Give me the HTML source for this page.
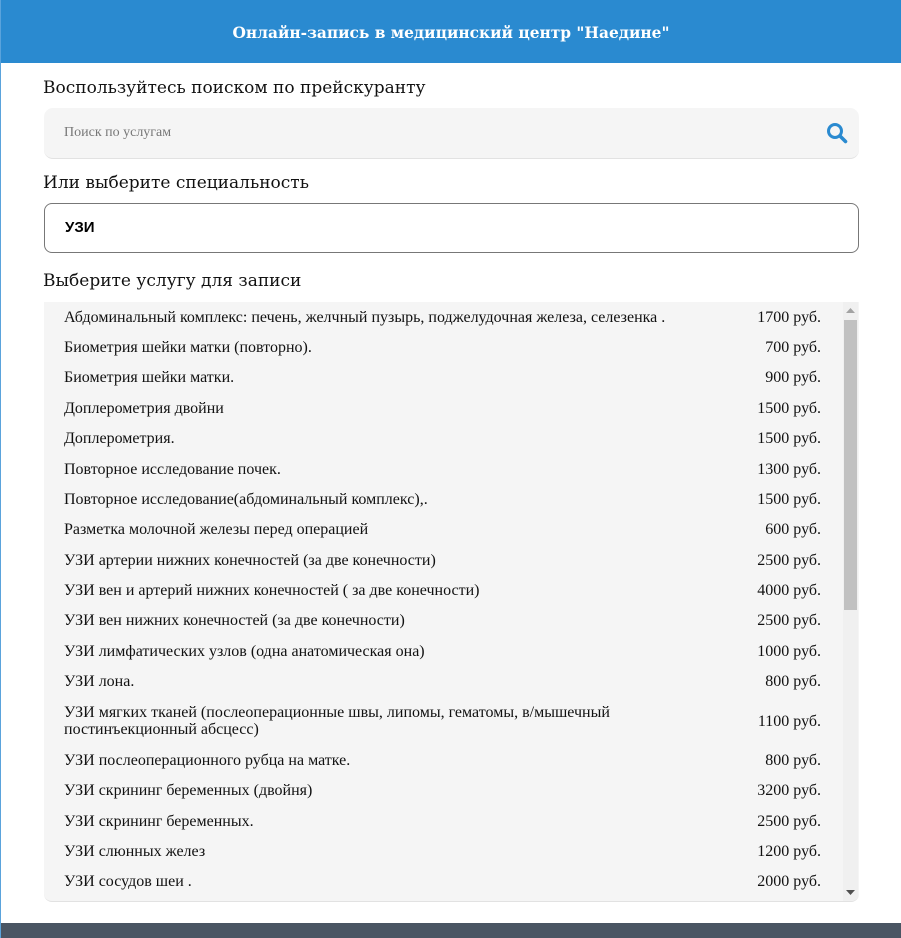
<!DOCTYPE html>
<html><head><meta charset="utf-8"><style>
*{box-sizing:border-box;margin:0;padding:0}
html,body{width:901px;height:938px;overflow:hidden;background:#fff}
body{position:relative;font-family:"Liberation Serif",serif;border-left:1px solid #5aa3dc}
.hdr{position:absolute;left:0;top:0;width:900px;height:63px;background:#2a8ad0;color:#fff;text-align:center;line-height:67px;font-family:"DejaVu Serif","Liberation Serif",serif;font-size:15.4px;font-weight:bold}
h2{position:absolute;left:42px;font-weight:normal;color:#111;font-family:"DejaVu Serif","Liberation Serif",serif;font-size:17px}
.search{position:absolute;left:43px;top:108px;width:815px;height:51px;background:#f5f5f5;border-radius:9px;border-bottom:1px solid #e2e2e2}
.search span{position:absolute;left:20px;top:17px;font-size:14px;color:#777}
.search svg{position:absolute;right:10px;top:13px}
.sel{position:absolute;left:43px;top:203px;width:815px;height:50px;border:1px solid #777;border-radius:8px}
.sel span{position:absolute;left:20px;top:15px;font-size:15px;font-weight:bold;font-family:"Liberation Sans",sans-serif}
.list{position:absolute;left:43px;top:302px;width:815px;height:600px;background:#f5f5f5;border-radius:0 0 8px 8px;border-bottom:1px solid #e2e2e2;overflow:hidden}
.row{display:flex;padding:6.7px 38px 6.7px 20px;font-size:16px;line-height:17px;color:#111;align-items:center}
.row .n{flex:1;padding-right:60px}
.row .p{white-space:nowrap}
.sb{position:absolute;right:1px;top:0;width:15px;height:600px;background:#f0f0f0}
.thumb{position:absolute;left:1px;top:18px;width:13px;height:290px;background:#c1c1c1}
.foot{position:absolute;left:0;top:923px;width:900px;height:15px;background:#4a5563}
</style></head><body>
<div class="hdr">Онлайн-запись в медицинский центр "Наедине"</div>
<h2 style="top:78px">Воспользуйтесь поиском по прейскуранту</h2>
<div class="search"><span>Поиск по услугам</span><svg width="24" height="24" viewBox="0 0 24 24"><circle cx="10" cy="10" r="6.5" fill="none" stroke="#2a8ad0" stroke-width="3"/><path d="M15 15l5.5 5.5" stroke="#2a8ad0" stroke-width="3.6" stroke-linecap="round"/></svg></div>
<h2 style="top:173px">Или выберите специальность</h2>
<div class="sel"><span>УЗИ</span></div>
<h2 style="top:271px">Выберите услугу для записи</h2>
<div class="list">
<div class="row"><div class="n">Абдоминальный комплекс: печень, желчный пузырь, поджелудочная железа, селезенка .</div><div class="p">1700 руб.</div></div>
<div class="row"><div class="n">Биометрия шейки матки (повторно).</div><div class="p">700 руб.</div></div>
<div class="row"><div class="n">Биометрия шейки матки.</div><div class="p">900 руб.</div></div>
<div class="row"><div class="n">Доплерометрия двойни</div><div class="p">1500 руб.</div></div>
<div class="row"><div class="n">Доплерометрия.</div><div class="p">1500 руб.</div></div>
<div class="row"><div class="n">Повторное исследование почек.</div><div class="p">1300 руб.</div></div>
<div class="row"><div class="n">Повторное исследование(абдоминальный комплекс),.</div><div class="p">1500 руб.</div></div>
<div class="row"><div class="n">Разметка молочной железы перед операцией</div><div class="p">600 руб.</div></div>
<div class="row"><div class="n">УЗИ артерии нижних конечностей (за две конечности)</div><div class="p">2500 руб.</div></div>
<div class="row"><div class="n">УЗИ вен и артерий нижних конечностей ( за две конечности)</div><div class="p">4000 руб.</div></div>
<div class="row"><div class="n">УЗИ вен нижних конечностей (за две конечности)</div><div class="p">2500 руб.</div></div>
<div class="row"><div class="n">УЗИ лимфатических узлов (одна анатомическая она)</div><div class="p">1000 руб.</div></div>
<div class="row"><div class="n">УЗИ лона.</div><div class="p">800 руб.</div></div>
<div class="row" style="padding-top:7.2px;padding-bottom:7.2px"><div class="n" style="padding-right:130px">УЗИ мягких тканей (послеоперационные швы, липомы, гематомы, в/мышечный постинъекционный абсцесс)</div><div class="p">1100 руб.</div></div>
<div class="row"><div class="n">УЗИ послеоперационного рубца на матке.</div><div class="p">800 руб.</div></div>
<div class="row"><div class="n">УЗИ скрининг беременных (двойня)</div><div class="p">3200 руб.</div></div>
<div class="row"><div class="n">УЗИ скрининг беременных.</div><div class="p">2500 руб.</div></div>
<div class="row"><div class="n">УЗИ слюнных желез</div><div class="p">1200 руб.</div></div>
<div class="row"><div class="n">УЗИ сосудов шеи .</div><div class="p">2000 руб.</div></div>
<div class="row"><div class="n">УЗИ щитовидной железы</div><div class="p">1000 руб.</div></div>
<div class="sb"><svg style="position:absolute;left:3px;top:5px" width="9" height="6"><path d="M0 6L4.5 1 9 6z" fill="#a3a3a3"/></svg><div class="thumb"></div><svg style="position:absolute;left:3px;top:588px" width="9" height="6"><path d="M0 0L4.5 5 9 0z" fill="#505050"/></svg></div>
</div>
<div class="foot"></div>
</body></html>
